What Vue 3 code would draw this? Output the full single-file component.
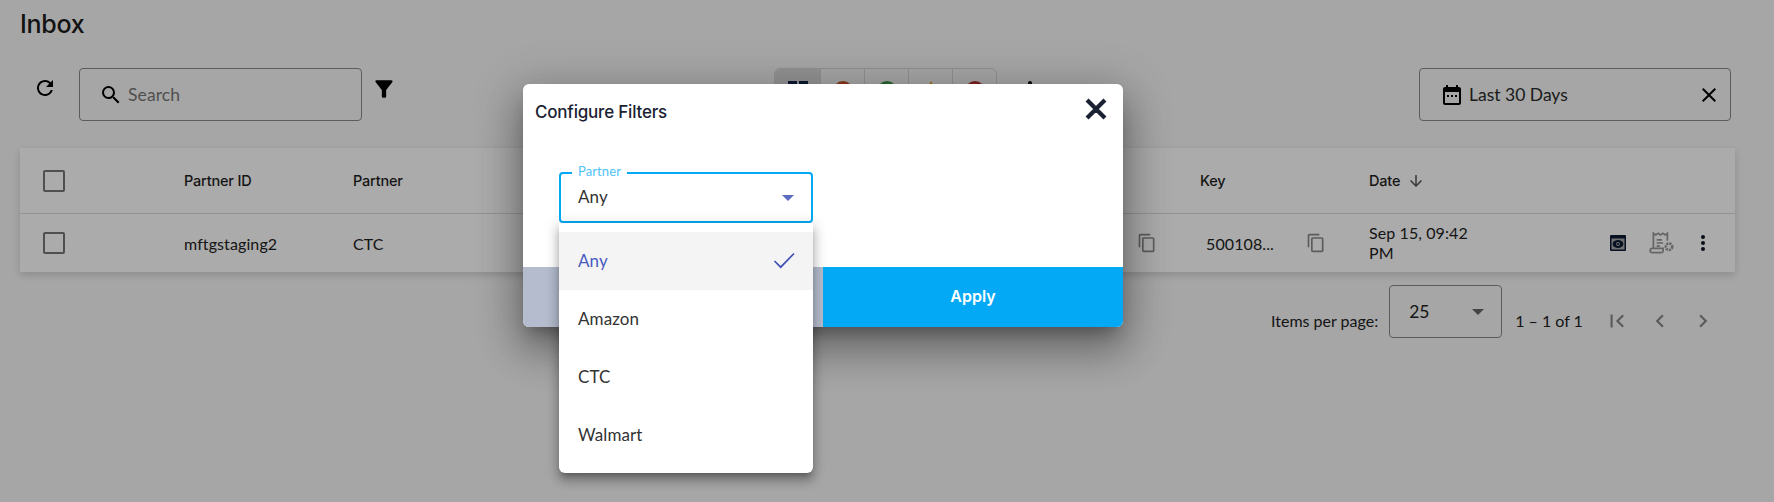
<script setup>
const segments = [
  { id: 'all', active: true },
  { id: 'orange', color: '#c9562a' },
  { id: 'green', color: '#3f9a45' },
  { id: 'amber', color: '#d6961c', tri: true },
  { id: 'red', color: '#bb3232' },
]
const options = ['Any', 'Amazon', 'CTC', 'Walmart']
</script>

<template>
  <div class="page">
    <h1 class="title">Inbox</h1>

    <div class="toolbar">
      <svg class="refresh" viewBox="0 0 24 24" width="24" height="24"><path d="M17.65 6.35A7.958 7.958 0 0 0 12 4c-4.42 0-7.99 3.58-7.99 8s3.57 8 7.99 8c3.73 0 6.84-2.55 7.73-6h-2.08A5.99 5.99 0 0 1 12 18c-3.31 0-6-2.69-6-6s2.69-6 6-6c1.66 0 3.14.69 4.22 1.78L13 11h7V4l-2.35 2.35z"/></svg>
      <div class="search">
        <svg viewBox="0 0 24 24" width="24" height="24"><path d="M15.5 14h-.79l-.28-.27A6.471 6.471 0 0 0 16 9.5 6.5 6.5 0 1 0 9.5 16c1.61 0 3.09-.59 4.23-1.57l.27.28v.79l5 4.99L20.49 19l-4.99-5zm-6 0C7.01 14 5 11.99 5 9.5S7.01 5 9.5 5 14 7.01 14 9.5 11.99 14 9.5 14z"/></svg>
        <span>Search</span>
      </div>
      <svg class="filter" viewBox="0 0 24 24" width="26" height="26"><path d="M4.25 5.61C6.27 8.2 10 13 10 13v6c0 .55.45 1 1 1h2c.55 0 1-.45 1-1v-6s3.72-4.8 5.74-7.39A.998.998 0 0 0 18.95 4H5.04c-.83 0-1.3.95-.79 1.61z"/></svg>

      <div class="segments">
        <div v-for="s in segments" :key="s.id" class="segment" :class="{ active: s.active }">
          <span v-if="s.active" class="grid-ico"></span>
          <span v-else-if="s.tri" class="tri"></span>
          <span v-else class="dot" :style="{ background: s.color }"></span>
        </div>
      </div>
      <span class="pin"></span>

      <div class="date-box">
        <svg viewBox="0 0 24 24" width="24" height="24"><path d="M19 4h-1V2h-2v2H8V2H6v2H5c-1.1 0-2 .9-2 2v14c0 1.1.9 2 2 2h14c1.1 0 2-.9 2-2V6c0-1.1-.9-2-2-2zm0 16H5V9h14v11zM7 12h2v2H7zm4 0h2v2h-2zm4 0h2v2h-2z"/></svg>
        <span class="date-text">Last 30 Days</span>
        <svg class="date-x" viewBox="0 0 24 24" width="24" height="24"><path d="M19 6.41 17.59 5 12 10.59 6.41 5 5 6.41 10.59 12 5 17.59 6.41 19 12 13.41 17.59 19 19 17.59 13.41 12z"/></svg>
      </div>
    </div>

    <div class="table">
      <div class="row head">
        <div class="cell check"><span class="box"></span></div>
        <div class="cell">Partner ID</div>
        <div class="cell">Partner</div>
        <div class="cell"></div>
        <div class="cell">Key</div>
        <div class="cell date-head">
          Date
          <svg viewBox="0 0 24 24" width="18" height="18"><path d="M20 12l-1.41-1.41L13 16.17V4h-2v12.17l-5.58-5.59L4 12l8 8 8-8z"/></svg>
        </div>
        <div class="cell"></div>
      </div>
      <div class="row body">
        <div class="cell check"><span class="box"></span></div>
        <div class="cell">mftgstaging2</div>
        <div class="cell">CTC</div>
        <div class="cell copy-cell">
          <svg class="copy" viewBox="0 0 24 24" width="20" height="20"><path d="M16 1H4c-1.1 0-2 .9-2 2v14h2V3h12V1zm3 4H8c-1.1 0-2 .9-2 2v14c0 1.1.9 2 2 2h11c1.1 0 2-.9 2-2V7c0-1.1-.9-2-2-2zm0 16H8V7h11v14z"/></svg>
        </div>
        <div class="cell key-cell">
          <span class="key-val">500108...</span>
          <svg class="copy" viewBox="0 0 24 24" width="20" height="20"><path d="M16 1H4c-1.1 0-2 .9-2 2v14h2V3h12V1zm3 4H8c-1.1 0-2 .9-2 2v14c0 1.1.9 2 2 2h11c1.1 0 2-.9 2-2V7c0-1.1-.9-2-2-2zm0 16H8V7h11v14z"/></svg>
        </div>
        <div class="cell date-cell">Sep 15, 09:42 PM</div>
        <div class="cell actions">
          <svg viewBox="0 0 18 18" width="18" height="18">
            <rect x="1" y="1" width="16" height="16" rx="1" fill="#0d1a33"/>
            <rect x="2.5" y="4.5" width="13" height="11" fill="#ababab"/>
            <ellipse cx="9" cy="10" rx="5.4" ry="4" fill="#0d1a33"/>
            <circle cx="9" cy="10" r="1.9" fill="#ababab"/>
            <circle cx="9" cy="10" r="1" fill="#0d1a33"/>
          </svg>
          <svg class="receipt" viewBox="0 0 26 24" width="28" height="26" fill="none" stroke="#989898" stroke-width="1.6">
            <path d="M5 17V3l2.2 1.6L9.4 3l2.2 1.6L13.8 3 16 4.6 18 3v7"/>
            <path d="M8 9h5M8 12h6M8 15h3"/>
            <path d="M2 19c0-1.5 1-2 2-2h10c0 1.5.5 4-1.5 4H4c-1 0-2-.6-2-2z"/>
            <circle cx="19.5" cy="15.5" r="3" stroke-width="2.4" stroke-dasharray="2 .8"/>
          </svg>
          <svg viewBox="0 0 24 24" width="24" height="24" fill="#0d1526"><circle cx="12" cy="6" r="2"/><circle cx="12" cy="12" r="2"/><circle cx="12" cy="18" r="2"/></svg>
        </div>
      </div>
    </div>

    <div class="pager">
      <span class="pager-label">Items per page:</span>
      <div class="pager-select"><span>25</span><i class="caret"></i></div>
      <span class="range">1 – 1 of 1</span>
      <div class="pager-btns">
        <svg viewBox="0 0 24 24" width="26" height="26"><path d="M18.41 16.59 13.82 12l4.59-4.59L17 6l-6 6 6 6zM6 6h2v12H6z"/></svg>
        <svg viewBox="0 0 24 24" width="26" height="26"><path d="M15.41 7.41 14 6l-6 6 6 6 1.41-1.41L10.83 12z"/></svg>
        <svg viewBox="0 0 24 24" width="26" height="26"><path d="M10 6 8.59 7.41 13.17 12l-4.58 4.59L10 18l6-6z"/></svg>
      </div>
    </div>

    <div class="overlay">
      <div class="modal">
        <div class="modal-head">
          <span class="modal-title">Configure Filters</span>
          <svg viewBox="0 0 24 24" width="32" height="32"><path d="M19 6.41 17.59 5 12 10.59 6.41 5 5 6.41 10.59 12 5 17.59 6.41 19 12 13.41 17.59 19 19 17.59 13.41 12z"/></svg>
        </div>
        <div class="modal-body">
          <div class="field">
            <label>Partner</label>
            <span>Any</span>
            <i class="field-caret"></i>
            <div class="menu">
              <div v-for="(o, i) in options" :key="o" class="option" :class="{ selected: i === 0 }">
                <span>{{ o }}</span>
                <svg v-if="i === 0" viewBox="0 0 24 24" width="24" height="24" fill="none" stroke="#3f51b5" stroke-width="1.7"><path d="M2.5 13l6.2 6.2L22 5.5"/></svg>
              </div>
            </div>
          </div>
        </div>
        <div class="modal-foot">
          <div class="btn cancel">Cancel</div>
          <div class="btn apply">Apply</div>
        </div>
      </div>
    </div>
  </div>
</template>

<style scoped>
.page {
  position: relative;
  height: 502px;
  overflow: hidden;
  background: #f8f8f8;
  padding: 0 39px 0 20px;
  box-sizing: border-box;
  font-family: "Lato", "Noto Sans", sans-serif;
  font-size: 16px;
  letter-spacing: 0.1px;
  color: #222;
}
.title {
  margin: 0;
  padding-top: 8px;
  height: 68px;
  box-sizing: border-box;
  font-family: "Inter", sans-serif;
  font-size: 25px;
  line-height: 32px;
  font-weight: 500;
  letter-spacing: -0.3px;
  color: #1c1c1c;
}
.toolbar {
  display: flex;
  align-items: flex-start;
  height: 80px;
}
.refresh { margin: 8px 0 0 13px; }
.search {
  margin-left: 22px;
  width: 283px;
  height: 53px;
  box-sizing: border-box;
  border: 1px solid #8a8a8a;
  border-radius: 4px;
  display: flex;
  align-items: center;
  padding-left: 19px;
  gap: 5px;
  color: #777;
  font-size: 17.5px;
}
.search svg { flex: none; }
.filter { margin: 8px 0 0 9px; }
.segments {
  margin-left: 377px;
  display: flex;
  height: 53px;
  border: 1px solid #d8d8d8;
  border-radius: 6px;
  overflow: hidden;
}
.segment {
  width: 44px;
  display: flex;
  justify-content: center;
  padding-top: 12px;
  box-sizing: border-box;
  border-left: 1px solid #d8d8d8;
}
.segment:first-child { border-left: 0; width: 45px; }
.segment.active { background: #dcdcdc; }
.grid-ico { width: 20px; height: 20px; background: linear-gradient(90deg, #14264d 9px, transparent 9px, transparent 11px, #14264d 11px); }
.dot { width: 20px; height: 20px; border-radius: 50%; }
.tri { width: 0; height: 0; border-left: 9px solid transparent; border-right: 9px solid transparent; border-bottom: 18px solid #e2a11e; }
.pin { margin: 13px 0 0 31px; width: 4px; height: 20px; border-radius: 2px; background: #111; }
.date-box {
  margin: 0 4px 0 auto;
  width: 312px;
  height: 53px;
  box-sizing: border-box;
  border: 1px solid #8a8a8a;
  border-radius: 4px;
  display: flex;
  align-items: center;
  padding: 0 9px 0 20px;
  font-size: 17.5px;
  letter-spacing: 0;
  color: #2a2a2a;
}
.date-text { margin-left: 5px; }
.date-x { margin-left: auto; }
.table {
  background: #fff;
  box-shadow: 0 3px 8px rgba(0,0,0,.16);
}
.row {
  display: grid;
  grid-template-columns: 164px 169px 793px 54px 169px 231px 135px;
  align-items: center;
}
.head {
  height: 66px;
  border-bottom: 1px solid #dcdcdc;
  box-sizing: border-box;
  font-family: "Inter", sans-serif;
  font-size: 14.5px;
  font-weight: 500;
  letter-spacing: -0.2px;
  color: #1f1f1f;
}
.body { height: 58px; }
.check { padding-left: 23px; display: flex; }
.box {
  width: 18px;
  height: 18px;
  border: 2px solid #777;
  border-radius: 2px;
  display: block;
}
.date-head { display: flex; align-items: center; gap: 7px; }
.date-head svg { fill: #555; }
.copy { fill: #8a8a8a; display: block; }
.copy-cell { margin-left: -9px; }
.key-cell { display: flex; align-items: center; padding-left: 6px; }
.key-val { width: 100px; }
.date-cell { width: 120px; line-height: 20px; }
.actions { display: flex; align-items: center; padding-left: 9px; }
.receipt { margin: 0 15px 0 21px; }
.pager {
  display: flex;
  align-items: center;
  margin-top: 13px;
  padding-left: 1251px;
  height: 53px;
  white-space: nowrap;
  font-size: 16px;
  letter-spacing: 0;
}
.pager-label { margin-top: 18px; }
.pager-select {
  margin-left: 11px;
  width: 113px;
  height: 53px;
  flex: none;
  box-sizing: border-box;
  border: 1px solid #8a8a8a;
  border-radius: 4px;
  display: flex;
  align-items: center;
  justify-content: space-between;
  padding: 0 17px 0 19px;
  font-size: 17.5px;
}
.caret { width: 0; height: 0; border-left: 6px solid transparent; border-right: 6px solid transparent; border-top: 6px solid #666; }
.range { margin: 18px 0 0 13px; }
.pager-btns { display: flex; gap: 17px; margin: 18px 0 0 21px; }
.pager-btns svg { fill: #8a8a8a; display: block; }
.overlay {
  position: absolute;
  inset: 0;
  background: rgba(0,0,0,.33);
  padding: 84px 0 0 523px;
}
.modal {
  position: relative;
  width: 600px;
  background: #fff;
  border-radius: 6px;
  box-shadow: 0 11px 15px -7px rgba(0,0,0,.3), 0 24px 38px 3px rgba(0,0,0,.22), 0 9px 46px 8px rgba(0,0,0,.2);
}
.modal-head {
  height: 56px;
  display: flex;
  justify-content: space-between;
  align-items: center;
  padding: 0 11px 0 12px;
  box-sizing: border-box;
}
.modal-head svg { fill: #1a2233; stroke: #1a2233; stroke-width: 1.2; margin-top: -6px; }
.modal-title {
  font-family: "Inter", sans-serif;
  font-size: 17px;
  font-weight: 500;
  letter-spacing: -0.2px;
  color: #1a2233;
}
.modal-body { padding: 32px 0 44px 36px; }
.field {
  position: relative;
  width: 254px;
  height: 51px;
  box-sizing: border-box;
  border: 2px solid #03a9f4;
  border-radius: 4px;
  display: flex;
  align-items: center;
  padding: 0 0 2px 17px;
  font-size: 17px;
  color: #333;
}
.field label {
  position: absolute;
  left: 11px;
  top: -11px;
  padding: 0 6px;
  background: #fff;
  font-size: 13px;
  line-height: 16px;
  color: #4fc3f7;
}
.field-caret {
  position: absolute;
  right: 17px;
  top: 21px;
  width: 0; height: 0;
  border-left: 6px solid transparent;
  border-right: 6px solid transparent;
  border-top: 6px solid #5c6bc0;
}
.menu {
  position: absolute;
  left: -2px;
  top: 49px;
  width: 254px;
  padding: 9px 0;
  background: #fff;
  border-radius: 0 0 6px 6px;
  box-shadow: 0 5px 5px -3px rgba(0,0,0,.25), 0 8px 10px 1px rgba(0,0,0,.18), 0 3px 14px 2px rgba(0,0,0,.16);
  z-index: 2;
  font-size: 17px;
}
.option {
  height: 58px;
  display: flex;
  align-items: center;
  justify-content: space-between;
  padding: 0 17px 2px 19px;
  box-sizing: border-box;
  color: #333;
}
.option.selected { background: #f4f4f5; color: #4a5bbf; }
.modal-foot { display: grid; grid-template-columns: 300px 300px; height: 60px; }
.btn {
  display: flex;
  align-items: center;
  justify-content: center;
  font-family: "Inter", sans-serif;
  font-size: 16px;
  font-weight: 600;
  letter-spacing: 0;
  padding-bottom: 2px;
  box-sizing: border-box;
  color: #fff;
}
.cancel { background: #b4bccd; border-radius: 0 0 0 6px; }
.apply { background: #03a9f4; border-radius: 0 0 6px 0; }
</style>

<style>
html, body { margin: 0; background: #f8f8f8; }
</style>
